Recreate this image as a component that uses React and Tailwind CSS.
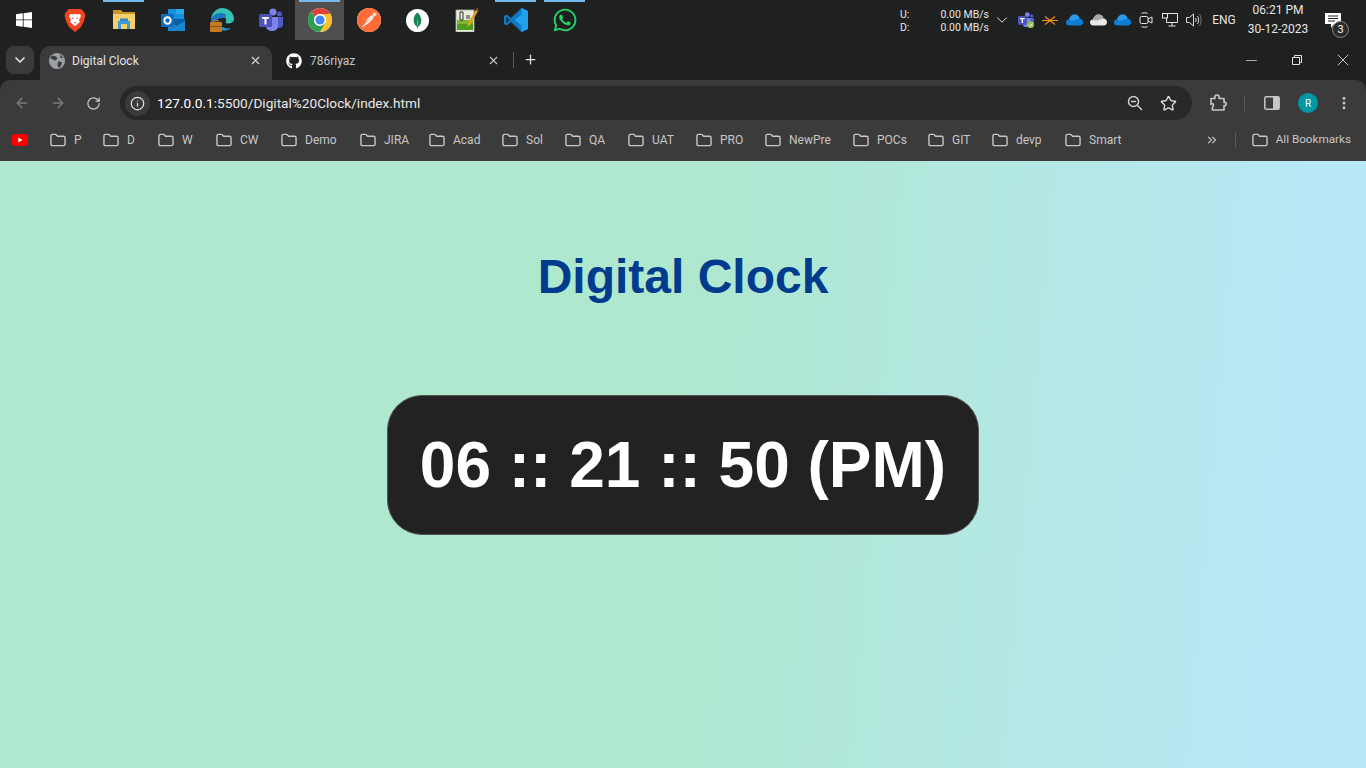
import { ArrowLeft, ArrowRight, RotateCw, Info, Star, EllipsisVertical, Plus, X, ChevronDown, Minus, ChevronsRight } from "lucide-react";
import { FaGithub, FaWhatsapp } from "react-icons/fa";
import { SiPostman, SiMongodb } from "react-icons/si";

const uiFont = "font-['Roboto',sans-serif]";

function WindowsLogo() {
  return (
    <svg width="16" height="16" viewBox="0 0 16 16" fill="#fff">
      <path d="M0 2.3 6.8 1.3V7.5H0ZM7.6 1.2 16 0V7.5H7.6ZM0 8.3H6.8V14.7L0 13.7ZM7.6 8.3H16V16L7.6 14.8Z" />
    </svg>
  );
}

function Brave() {
  return (
    <svg width="22" height="24" viewBox="0 0 22 24">
      <path d="M5 1H17L20 4 21.5 7 20 13 17 19 11 24 5 19 2 13 .5 7 2 4Z" fill="#f0431f" />
      <path d="M6 6 9 6.5 11 5.8 13 6.5 16 6 17 8 15 12 16 14 13 16.5 11 18 9 16.5 6 14 7 12 5 8Z" fill="#fff" />
      <path d="M8 9 10 10.5 8.5 11ZM14 9 12 10.5 13.5 11ZM10 14H12L11 15.5Z" fill="#f0431f" />
    </svg>
  );
}

function Explorer() {
  return (
    <svg width="24" height="22" viewBox="0 0 24 22">
      <path d="M1 1H9L11 3H23V6H1Z" fill="#c9962a" />
      <path d="M1 5H23V20H1Z" fill="#f4cf6a" />
      <path d="M6 20V12H18V20H15V15H9V20Z" fill="#3f9bd8" />
      <path d="M8 12V9.500H16V12" fill="#2f86c4" />
    </svg>
  );
}

function Outlook() {
  return (
    <svg width="24" height="23" viewBox="0 0 24 23">
      <path d="M7 0H23V10H7Z" fill="#1490df" />
      <path d="M15 0H23V5H15Z" fill="#28a8ea" />
      <path d="M7 10H24V22H7Z" fill="#0a5fa8" />
      <path d="M7 12 15.5 17 24 12V22H7Z" fill="#1a86d0" />
      <rect x="0" y="5" width="13" height="13" rx="1" fill="#0f6cbd" />
      <circle cx="6.5" cy="11.5" r="3.2" fill="none" stroke="#fff" strokeWidth="1.9" />
    </svg>
  );
}

function Edge() {
  return (
    <svg width="24" height="24" viewBox="0 0 24 24">
      <path d="M1 11C2 4 7 0 12 0c7 0 12 5 12 11 0 3-3 4.500-6 4.500-2 0-3-1-2-2 1-3-2-6-6-6-4 0-7 2-9 3.500Z" fill="#35c1b0" />
      <path d="M1 11C3 7 7 5 11 5c3 0 5 1 5 3 0 1-1 2-3 2C7 10 4 13 4 18 2 16 .8 14 1 11Z" fill="#1a78c2" />
      <path d="M6 19c3 4 10 5 15 1-4 1-9 0-11-3Z" fill="#2a9ad6" />
      <rect x="0" y="14" width="12" height="10" rx="1" fill="#c77a22" />
      <rect x="4" y="12.500" width="4" height="2.500" fill="none" stroke="#c77a22" strokeWidth="1" />
      <rect x="0" y="18" width="12" height="1" fill="#8c5312" />
    </svg>
  );
}

function Teams({ size = 24, check = false }) {
  return (
    <svg width={size} height={size} viewBox="0 0 24 24">
      <circle cx="14" cy="4" r="3.600" fill="#7b83eb" />
      <circle cx="20.500" cy="6" r="2.500" fill="#5059c9" />
      <path d="M17 9H24V16C24 19 22 20 20 20 18 20 17 19 17 17Z" fill="#5059c9" />
      <path d="M7 9H19V18C19 21 16.500 23 13 23 10 23 7 21 7 18Z" fill="#7b83eb" />
      <rect x="0" y="6" width="13" height="13" rx="1.500" fill="#4b53bc" />
      <path d="M3 9H10V10.800H7.500V16.500H5.500V10.800H3Z" fill="#fff" />
      {check && (
        <>
          <circle cx="19" cy="19" r="5" fill="#92c353" />
          <path d="M16.500 19 18.500 21 21.500 17.500" fill="none" stroke="#fff" strokeWidth="1.400" />
        </>
      )}
    </svg>
  );
}

function Chrome() {
  return (
    <svg width="24" height="24" viewBox="0 0 24 24">
      <circle cx="12" cy="12" r="12" fill="#fff" />
      <path d="M12 0A12 12 0 0 1 22.400 6H12A6 6 0 0 0 6.800 9L3.500 3.500A12 12 0 0 1 12 0Z" fill="#db4437" />
      <path d="M22.400 6A12 12 0 0 1 12 24L17.200 15A6 6 0 0 0 17.200 9 6 6 0 0 0 12 6Z" fill="#fbc02d" />
      <path d="M12 24A12 12 0 0 1 3.500 3.500L6.800 9A6 6 0 0 0 6.800 15 6 6 0 0 0 12 18L17.200 15Z" fill="#2e9e4f" />
      <circle cx="12" cy="12" r="5.800" fill="#fff" />
      <circle cx="12" cy="12" r="4.600" fill="#4285f4" />
    </svg>
  );
}

function Postman() {
  return (
    <span className="relative flex h-6 w-6 items-center justify-center rounded-full bg-white">
      <SiPostman size={24} color="#ff6c37" />
    </span>
  );
}

function Mongo() {
  return (
    <span className="flex h-[23px] w-[23px] items-center justify-center rounded-full bg-white">
      <SiMongodb size={17} color="#13854e" />
    </span>
  );
}

function NotepadPlus() {
  return (
    <svg width="24" height="24" viewBox="0 0 24 24">
      <rect x="1" y="2" width="18" height="22" fill="#e8ecd8" stroke="#a9a9a9" strokeWidth=".8" />
      <path d="M2 12H18V22H2Z" fill="#7cb82f" />
      <path d="M2 16H18V22H2Z" fill="#4d9a1f" />
      <path d="M5 4V12M8 4V12M5 4H8M5 12H8M11 8H15M11 10H15" stroke="#333" strokeWidth="1" fill="none" />
      <path d="M22 0 13 15 12 19 15 17 23.500 2Z" fill="#e8a020" />
      <path d="M22 0 23.500 2 22.500 3.500 20.800 2Z" fill="#8b3a2a" />
    </svg>
  );
}

function VsCode() {
  return (
    <svg width="24" height="24" viewBox="0 0 24 24">
      <path d="M17.500 0 24 3V21L17.500 24 7 14 2.500 17.500 0 16V8L2.500 6.500 7 10Z" fill="#0e7ac4" />
      <path d="M17.500 0 24 3V21L17.500 24ZM17.500 6.800 10.500 12 17.500 17.200Z" fill="#22a2ee" />
      <path d="M2.500 9 5.500 12 2.500 15Z" fill="#1f1f1f" />
    </svg>
  );
}

function TaskIcon({ open, active, children }) {
  return (
    <div className={`relative flex h-10 w-[49px] shrink-0 items-center justify-center ${active ? "bg-[#4f4f4f]" : ""}`}>
      {open && <span className="absolute left-1 right-1 top-0 h-0.5 bg-[#76b9ed]" />}
      {children}
    </div>
  );
}

function Cloud({ color = "#0f7fd6", top = "#2d9be8" }) {
  return (
    <svg width="17" height="12" viewBox="0 0 17 12">
      <path d="M3.500 11.500C1 11.500 0 10 0 8.500 0 6.800 1.500 5.500 3 5.600 3.800 2.500 6 .5 8.500 .5c2.600 0 4.400 1.600 5 4C15.500 4.600 17 6.300 17 8.200c0 2-1.400 3.300-3.500 3.300Z" fill={color} />
      <path d="M3 5.600C3.800 2.500 6 .5 8.500 .5c2.600 0 4.400 1.600 5 4C10 5 6 8 3 5.600Z" fill={top} />
    </svg>
  );
}

function Folder() {
  return (
    <svg width="16" height="14" viewBox="0 0 17 14" fill="none" stroke="#c7c7c7" strokeWidth="1.500" className="shrink-0">
      <path d="M1 2.500C1 1.500 1.600 1 2.500 1H6.300L8 3H14.500C15.400 3 16 3.600 16 4.500V11.500C16 12.400 15.400 13 14.500 13H2.500C1.600 13 1 12.400 1 11.500Z" strokeLinejoin="round" />
    </svg>
  );
}

function Globe() {
  return (
    <svg width="16" height="16" viewBox="0 0 16 16">
      <circle cx="8" cy="8" r="8" fill="#9aa0a6" />
      <path d="M3 2.500 7 3.500 8.500 5.500 6.500 7.500 4.500 7 1.500 5ZM9 8.500 13 9 12 13 9.500 15 8.500 12Z M11 1.500 14.500 5 11.500 5Z" fill="#3b3b3b" />
    </svg>
  );
}

const bookmarks = [
  ["P", "w-[53px]"],
  ["D", "w-[55px]"],
  ["W", "w-[58px]"],
  ["CW", "w-[65px]"],
  ["Demo", "w-[79px]"],
  ["JIRA", "w-[69px]"],
  ["Acad", "w-[73px]"],
  ["Sol", "w-[63px]"],
  ["QA", "w-[63px]"],
  ["UAT", "w-[68px]"],
  ["PRO", "w-[69px]"],
  ["NewPre", "w-[88px]"],
  ["POCs", "w-[75px]"],
  ["GIT", "w-[64px]"],
  ["devp", "w-[73px]"],
  ["Smart", "w-[72px]"],
];

function Taskbar() {
  return (
    <div className="flex h-10 shrink-0 items-center bg-[#1f2020] text-[#e6e6e6]">
      <div className="flex w-[50px] shrink-0 justify-center pr-[2px]">
        <WindowsLogo />
      </div>
      <TaskIcon><Brave /></TaskIcon>
      <TaskIcon open><Explorer /></TaskIcon>
      <TaskIcon><Outlook /></TaskIcon>
      <TaskIcon><Edge /></TaskIcon>
      <TaskIcon><Teams /></TaskIcon>
      <TaskIcon open active><Chrome /></TaskIcon>
      <TaskIcon><Postman /></TaskIcon>
      <TaskIcon><Mongo /></TaskIcon>
      <TaskIcon><NotepadPlus /></TaskIcon>
      <TaskIcon open><VsCode /></TaskIcon>
      <TaskIcon open><FaWhatsapp size={26} color="#25d366" /></TaskIcon>

      <div className="ml-auto flex items-center">
        <div className="flex w-[89px] justify-between pt-px text-[10.500px] leading-[13px]">
          <div><div>U:</div><div>D:</div></div>
          <div className="text-right"><div>0.00 MB/s</div><div>0.00 MB/s</div></div>
        </div>
        <div className="flex w-[25px] justify-center"><ChevronDown size={18} strokeWidth={1.300} color="#e6e6e6" /></div>
        <div className="flex w-6 justify-center"><Teams size={16} check /></div>
        <div className="flex w-6 justify-center">
          <svg width="16" height="9" viewBox="0 0 16 9" fill="none" stroke="#f08a17" strokeWidth="1.200">
            <path d="M0 4.500H16M3 .5 8 4.500 3 8.500M13 .5 8 4.500 13 8.500" />
          </svg>
        </div>
        <div className="flex w-6 justify-center"><Cloud /></div>
        <div className="flex w-6 justify-center"><Cloud color="#e8e8e8" top="#a8a8a8" /></div>
        <div className="flex w-6 justify-center"><Cloud /></div>
        <div className="flex w-6 justify-center">
          <svg width="14" height="16" viewBox="0 0 14 16" fill="none" stroke="#e6e6e6" strokeWidth="1">
            <rect x="1" y="4.500" width="8" height="7" rx="1.500" />
            <path d="M9 7 13 5V11L9 9M2.500 1.500C4 .5 7 .5 8.500 1.500M2.500 14.500C4 15.500 7 15.500 8.500 14.500" />
          </svg>
        </div>
        <div className="flex w-6 justify-center">
          <svg width="16" height="14" viewBox="0 0 16 14" fill="none" stroke="#e6e6e6" strokeWidth="1">
            <path d="M4.500 .5H15.500V9.500H4.500ZM10 9.500V13M6.500 13H13.500" />
            <rect x=".5" y=".5" width="5" height="4.500" fill="#1f2020" />
          </svg>
        </div>
        <div className="flex w-6 justify-center">
          <svg width="16" height="14" viewBox="0 0 16 14" fill="none" stroke="#d8d8d8" strokeWidth="1">
            <path d="M.5 4.500H3.500L7.500 1V13L3.500 9.500H.5ZM9.500 5C10.300 6 10.300 8 9.500 9M11.500 3C13 5 13 9 11.500 11" />
            <path d="M13.500 1C15.500 4 15.500 10 13.500 13" stroke="#777" />
          </svg>
        </div>
        <div className="flex w-[36px] justify-center text-xs">ENG</div>
        <div className="ml-[7px] flex w-[58px] flex-col items-center whitespace-nowrap text-xs leading-[19px]">
          <div>06:21 PM</div>
          <div>30-12-2023</div>
        </div>
        <div className="relative flex w-[59px] justify-center pr-[7px]">
          <svg width="16" height="15" viewBox="0 0 16 15">
            <path d="M0 0H16V11H9L6 15V11H0Z" fill="#fff" />
            <path d="M3 3H13M3 5.500H13M3 8H10" stroke="#1f2020" strokeWidth="1" />
          </svg>
          <span className="absolute left-[25px] top-[8px] flex h-[17px] w-[17px] items-center justify-center rounded-full border border-[#8a8a8a] bg-[#2b2b2b] text-[11px] leading-none text-white">3</span>
        </div>
      </div>
    </div>
  );
}

function TabStrip() {
  return (
    <div className="flex h-10 shrink-0 items-end bg-[#1f2020] text-xs">
      <div className="mb-[6px] ml-[6px] mr-[6px] flex h-[28px] w-[28px] shrink-0 items-center justify-center rounded-lg bg-[#3b3b3b]">
        <ChevronDown size={16} strokeWidth={2.500} color="#e3e3e3" />
      </div>
      <div className="flex h-[34px] w-[232px] shrink-0 items-center rounded-t-[10px] bg-[#3b3b3b] pb-[5px] pl-[9px] pr-[10px] text-[#e3e3e3]">
        <Globe />
        <span className="ml-[7px]">Digital Clock</span>
        <X size={13} strokeWidth={2} className="ml-auto" />
      </div>
      <div className="flex h-[34px] w-[238px] shrink-0 items-center pb-[5px] pl-[14px] pr-[10px] text-[#c7c7c7]">
        <FaGithub size={16} color="#fff" />
        <span className="ml-2">786riyaz</span>
        <X size={13} strokeWidth={2} className="ml-auto" />
      </div>
      <div className="mb-[12px] ml-[3px] h-[16px] w-px bg-[#5a5a5a]" />
      <div className="mb-[13px] ml-[10px] flex w-[12px] justify-center text-[#e3e3e3]">
        <Plus size={15} strokeWidth={2} className="shrink-0" />
      </div>
      <div className="ml-auto flex h-10 items-center text-[#e6e6e6]">
        <div className="flex w-[46px] justify-center"><Minus size={17} strokeWidth={1} className="shrink-0" /></div>
        <div className="flex w-[46px] justify-center">
          <svg width="10" height="10" viewBox="0 0 10 10" fill="none" stroke="#e6e6e6">
            <path d="M.5 2.500H7.500V9.500H.5ZM2.500 2.500V.5H9.500V7.500H7.500" />
          </svg>
        </div>
        <div className="flex w-[46px] justify-center"><X size={20} strokeWidth={1} className="shrink-0" /></div>
      </div>
    </div>
  );
}

function Toolbar() {
  return (
    <div className="flex h-10 shrink-0 items-start rounded-t-[10px] bg-[#3b3b3b] pt-[6px]">
      <div className="flex h-[34px] w-[120px] shrink-0 items-center pl-[14px]">
        <ArrowLeft size={16} strokeWidth={2} color="#7d7d7d" />
        <ArrowRight size={16} strokeWidth={2} color="#7d7d7d" className="ml-[20px]" />
        <RotateCw size={15} strokeWidth={2} color="#c7c7c7" className="ml-[20px]" />
      </div>
      <div className="flex h-[34px] w-[1072px] shrink-0 items-center rounded-full bg-[#282828] pl-[5px] pr-[15px]">
        <div className="flex h-[25px] w-[25px] items-center justify-center rounded-full bg-[#3b3b3b]">
          <Info size={15} strokeWidth={2} color="#e3e3e3" />
        </div>
        <span className="ml-[7px] text-[13.650px] text-[#e8e8e8]">
          <span className="text-white">127.0.0.1</span>:5500/Digital%20Clock/index.html
        </span>
        <div className="ml-auto flex items-center gap-[17px]">
          <svg width="16" height="16" viewBox="0 0 16 16" fill="none" stroke="#d0d0d0" strokeWidth="1.500">
            <circle cx="6.500" cy="6.500" r="5" />
            <path d="M10.500 10.500 15 15M4 6.500H9" />
          </svg>
          <Star size={17} strokeWidth={2} color="#d8d8d8" />
        </div>
      </div>
      <div className="flex h-[34px] flex-1 items-center">
        <svg width="18" height="18" viewBox="0 0 18 18" fill="none" stroke="#c7c7c7" strokeWidth="1.600" className="ml-[17px]">
          <path d="M2 4.500H6C5.500 2 6.500 1 8 1S10.500 2 10 4.500H15V8.500C17 8 17.500 9 17 10.500S15.500 12 15 11.500V16H3.500C2.500 13.500 4.500 12.500 4.500 11 4.500 9.500 2.500 9.500 2 10.500Z" strokeLinejoin="round" />
        </svg>
        <div className="ml-[17px] h-[16px] w-px bg-[#5a5a5a]" />
        <svg width="16" height="14" viewBox="0 0 16 14" className="ml-[19px]">
          <rect x=".8" y=".8" width="14.400" height="12.400" rx="1.500" fill="none" stroke="#c7c7c7" strokeWidth="1.500" />
          <rect x="9" y="1" width="6" height="12" fill="#c7c7c7" />
        </svg>
        <div className="ml-[18px] flex h-5 w-5 items-center justify-center rounded-full bg-[#0097a7] text-[10px] text-white">R</div>
        <EllipsisVertical size={16} strokeWidth={2.500} color="#c7c7c7" className="ml-[18px]" />
      </div>
    </div>
  );
}

function BookmarksBar() {
  return (
    <div className="flex h-[41px] shrink-0 items-center bg-[#3b3b3b] pb-[1px] pr-[15px] text-xs text-[#c7c7c7]">
      <div className="flex w-[50px] shrink-0 justify-start pl-[12px]">
        <svg width="16" height="12" viewBox="0 0 16 12">
          <rect width="16" height="12" rx="3" fill="#f00" />
          <path d="M6.300 3.500 10.500 6 6.300 8.500Z" fill="#fff" />
        </svg>
      </div>
      {bookmarks.map(([name, width]) => (
        <div key={name} className={`flex shrink-0 items-center gap-2 ${width}`}>
          <Folder />
          <span>{name}</span>
        </div>
      ))}
      <div className="ml-auto flex items-center">
        <ChevronsRight size={14} strokeWidth={2} className="shrink-0" />
        <div className="ml-[16px] h-[16px] w-px shrink-0 bg-[#5a5a5a]" />
        <div className="ml-[16px] flex shrink-0 items-center gap-2">
          <Folder />
          <span className="text-[11.700px]">All Bookmarks</span>
        </div>
      </div>
    </div>
  );
}

export default function App() {
  return (
    <div className={`flex h-screen w-full flex-col overflow-hidden bg-[#1f2020] ${uiFont}`}>
      <Taskbar />
      <TabStrip />
      <Toolbar />
      <BookmarksBar />
      <main className="flex flex-1 flex-col items-center bg-[linear-gradient(95deg,#afe7cf_0%,#afe7cf_50%,#b9e8f8_95%)] font-['Liberation_Sans',Arial,sans-serif]">
        <h1 className="mt-[88px] text-5xl leading-[56px] font-bold text-[#003b8e]">Digital Clock</h1>
        <div className="mt-[90px] flex h-[140px] w-[592px] items-center justify-center rounded-[35px] border border-[#555] bg-[#222] text-[64px] font-bold text-white">
          06 :: 21 :: 50 (PM)
        </div>
      </main>
    </div>
  );
}
